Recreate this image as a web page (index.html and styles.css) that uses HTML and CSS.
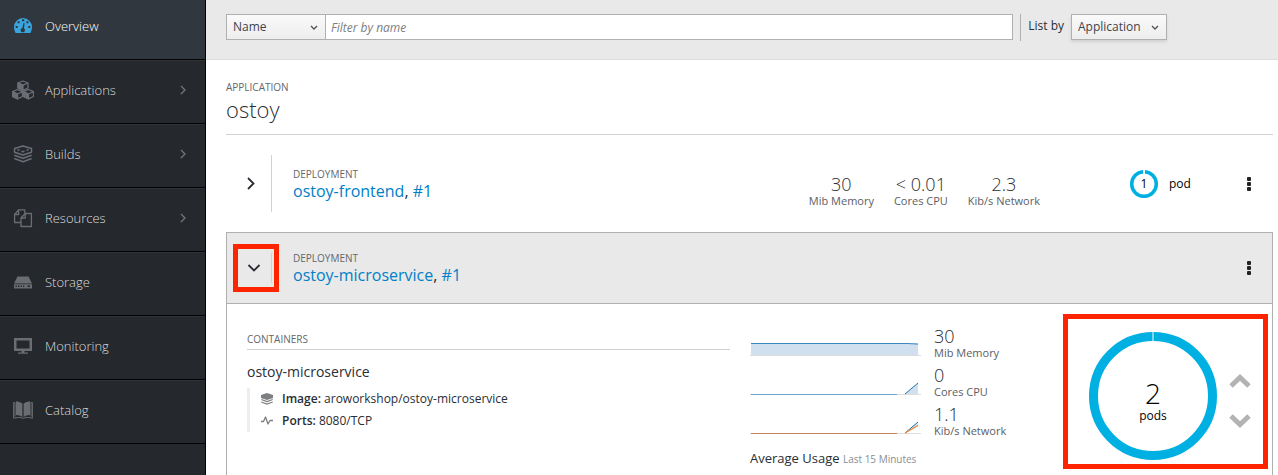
FILE: index.html
```html
<!DOCTYPE html>
<html lang="en">
<head>
<meta charset="utf-8">
<title>Overview</title>
<link rel="stylesheet" href="styles.css">
</head>
<body>
<div class="app">
  <nav class="sidebar" aria-label="Main">
    <a class="nav-item nav-item-active" href="#">
      <svg class="nav-icon" viewBox="0 0 22 20"><path fill="currentColor" fill-rule="evenodd" d="M2 11a9 9 0 0 1 18 0c0 2-.6 4-1.600 6H3.600C2.600 15 2 13 2 11zM10 5.300h2.200V3.300H10zM5.600 7.200h2V5.200h-2zM14.400 7.200h2V5.200h-2zM3.700 12h2v-2h-2zM16.300 12h2v-2h-2zM11.500 7l-1.200 5a2.200 2.200 0 1 0 1.700.3l.6-5z"/></svg>
      <span class="nav-label">Overview</span>
    </a>
    <a class="nav-item" href="#">
      <svg class="nav-icon" viewBox="0 0 22 20"><g stroke="currentColor" stroke-width="1.300" stroke-linejoin="round"><path fill="none" d="M11 1l5 2v5l-5 2.300L6 8V3zM6 3l5 2.200L16 3M5.500 9.500l5 2.200v4.800l-5 2.300-5-2.300v-4.800zM.5 11.700l5 2.300 5-2.300M16.500 9.500l5 2.200v4.800l-5 2.300-5-2.300v-4.800zM11.500 11.700l5 2.300 5-2.300"/><path fill="currentColor" d="M11 5.200v5L6 8V3zM5.500 14v4.800l-5-2.300v-4.800zM16.500 14v4.800l-5-2.300v-4.800z"/></g></svg>
      <span class="nav-label">Applications</span>
      <svg class="nav-arrow" viewBox="0 0 6 10"><path d="M1 1l4 4-4 4"/></svg>
    </a>
    <a class="nav-item" href="#">
      <svg class="nav-icon" viewBox="0 0 22 20"><g fill="none" stroke="currentColor" stroke-width="1.500" stroke-linejoin="round"><path d="M2.500 4.500L11 2l8.500 2.500v3.700L11 11 2.500 8.200zM2.300 11.200L11 14.200l8.700-3M2.300 14.500L11 17.700l8.700-3.200"/><path d="M5.500 5.700l2 .6M9.500 7.300l1.500.5 1.500-.5M14.500 6.300l2-.6"/></g></svg>
      <span class="nav-label">Builds</span>
      <svg class="nav-arrow" viewBox="0 0 6 10"><path d="M1 1l4 4-4 4"/></svg>
    </a>
    <a class="nav-item" href="#">
      <svg class="nav-icon" viewBox="0 0 22 20"><path fill="none" stroke="currentColor" stroke-width="1.300" stroke-linejoin="round" d="M9 14.500H2.600V6.500l4-4.600h6.200v4M2.600 6.500h4V1.900M9 10l4.200-4.500h6.200v13H9zM9 10h4.200V5.500"/></svg>
      <span class="nav-label">Resources</span>
      <svg class="nav-arrow" viewBox="0 0 6 10"><path d="M1 1l4 4-4 4"/></svg>
    </a>
    <a class="nav-item" href="#">
      <svg class="nav-icon" viewBox="0 0 22 20"><path fill="currentColor" d="M5.500 4.500h11l3.500 7H2z"/><path fill="currentColor" fill-rule="evenodd" d="M2 12.200h18v4.300H2zM3.500 13.600v1.300h1.300v-1.300zM6 13.600v1.300h1.300v-1.300zM8.500 13.600v1.300h1.300v-1.300zM11 13.600v1.300h1.300v-1.300zM15.500 13.600v1.300H18v-1.300z"/></svg>
      <span class="nav-label">Storage</span>
    </a>
    <a class="nav-item" href="#">
      <svg class="nav-icon" viewBox="0 0 22 20"><path fill="currentColor" fill-rule="evenodd" d="M2 2h18v13h-7.500v1.500H16v1.200H6v-1.200h3.500V15H2zM4.500 4.500v8h13v-8z"/></svg>
      <span class="nav-label">Monitoring</span>
    </a>
    <a class="nav-item" href="#">
      <svg class="nav-icon" viewBox="0 0 22 20"><path fill="currentColor" d="M4 1.200Q8 1.500 10.400 3.500V17Q8 15 4 15zM18 1.200Q14 1.500 11.600 3.500V17Q14 15 18 15z"/><path fill="none" stroke="currentColor" stroke-width="1" d="M3 2.500H1.600v15.700Q7 16.500 11 18.200q4-1.700 9.400 0V2.500H19M3 2.500v14M19 2.500v14"/></svg>
      <span class="nav-label">Catalog</span>
    </a>
  </nav>

  <main class="content">
    <form class="toolbar">
      <div class="filter">
        <div class="picker picker-name">
          <select class="picker-select" aria-label="Filter field"><option>Name</option></select>
          <svg class="picker-arrow" viewBox="0 0 8 6"><path d="M1 1l3 3 3-3"/></svg>
        </div>
        <input class="filter-input" type="text" placeholder="Filter by name" aria-label="Filter by name">
      </div>
      <div class="list-by">
        <label class="list-by-label" for="list-by">List by</label>
        <div class="picker picker-raised">
          <select class="picker-select" id="list-by"><option>Application</option></select>
          <svg class="picker-arrow" viewBox="0 0 8 6"><path d="M1 1l3 3 3-3"/></svg>
        </div>
      </div>
    </form>

    <div class="project">
      <header class="app-header">
        <div class="eyebrow">Application</div>
        <h1 class="app-name">ostoy</h1>
      </header>

      <section class="row">
        <button class="toggle" type="button" aria-label="Expand ostoy-frontend">
          <svg class="toggle-icon" viewBox="0 0 14 14"><path d="M5 1l5.500 5.500L5 12"/></svg>
        </button>
        <div class="row-title">
          <div class="eyebrow">Deployment</div>
          <h2 class="deployment"><a href="#">ostoy-frontend</a>, <a href="#">#1</a></h2>
        </div>
        <div class="summary">
          <div class="metric"><span class="metric-value">30</span><span class="metric-unit">Mib Memory</span></div>
          <div class="metric"><span class="metric-value">&lt; 0.01</span><span class="metric-unit">Cores CPU</span></div>
          <div class="metric"><span class="metric-value">2.3</span><span class="metric-unit">Kib/s Network</span></div>
        </div>
        <div class="pod-mini">
          <div class="ring ring-small">
            <svg class="ring-art" viewBox="0 0 28 28"><circle cx="14" cy="14" r="12.300" fill="none" stroke="#00b0e2" stroke-width="3.500"/><path d="M14 0v4" stroke="#fff" stroke-width="2"/></svg>
            <span class="ring-text">1</span>
          </div>
          <span>pod</span>
        </div>
        <button class="kebab" type="button" aria-label="Actions for ostoy-frontend">
          <svg class="kebab-icon" viewBox="0 0 4 14"><rect width="4" height="4" rx="1"/><rect y="5" width="4" height="4" rx="1"/><rect y="10" width="4" height="4" rx="1"/></svg>
        </button>
      </section>

      <section class="panel">
        <header class="row row-open">
          <button class="toggle toggle-marked" type="button" aria-label="Collapse ostoy-microservice">
            <svg class="toggle-icon" viewBox="0 0 14 14"><path d="M1.500 4L7 9.500 12.500 4"/></svg>
          </button>
          <div class="row-title">
            <div class="eyebrow">Deployment</div>
            <h2 class="deployment"><a href="#">ostoy-microservice</a>, <a href="#">#1</a></h2>
          </div>
          <button class="kebab" type="button" aria-label="Actions for ostoy-microservice">
            <svg class="kebab-icon" viewBox="0 0 4 14"><rect width="4" height="4" rx="1"/><rect y="5" width="4" height="4" rx="1"/><rect y="10" width="4" height="4" rx="1"/></svg>
          </button>
        </header>

        <div class="panel-body">
          <div class="containers">
            <h3 class="eyebrow containers-title">Containers</h3>
            <h4 class="container-name">ostoy-microservice</h4>
            <ul class="facts">
              <li class="fact">
                <svg class="fact-icon" viewBox="0 0 12 12"><path fill="currentColor" d="M0 2l6-2 6 2v3L6 7 0 5z"/><path fill="none" stroke="currentColor" stroke-width="1.200" d="M.3 6.500L6 8.600l5.700-2.100M.3 9L6 11.100 11.700 9"/></svg>
                <span><b>Image:</b> aroworkshop/ostoy-microservice</span>
              </li>
              <li class="fact">
                <svg class="fact-icon" viewBox="0 0 12 12"><path fill="none" stroke="currentColor" stroke-width="1.300" stroke-linejoin="round" d="M0 6.500h2.500L4.500 2 7 9 9 5.500h3"/></svg>
                <span><b>Ports:</b> 8080/TCP</span>
              </li>
            </ul>
          </div>

          <div class="usage">
            <div class="usage-row">
              <svg class="spark" viewBox="0 0 171 26"><path d="M0 25.500h171" stroke="#ddd"/><path fill="#d1e0ee" d="M1 13h167v12H1z"/><path fill="none" stroke="#3a87be" d="M1 13.500h156l11 .6"/></svg>
              <div class="metric metric-left"><span class="metric-value">30</span><span class="metric-unit">Mib Memory</span></div>
            </div>
            <div class="usage-row">
              <svg class="spark" viewBox="0 0 171 26"><path d="M0 25.500h171" stroke="#ddd"/><path fill="#d1e0ee" d="M155 25l13-11v11z"/><path fill="none" stroke="#6ba4cf" d="M1 25.500h146"/><path fill="none" stroke="#1f77b4" d="M155 25l13-11"/></svg>
              <div class="metric metric-left"><span class="metric-value">0</span><span class="metric-unit">Cores CPU</span></div>
            </div>
            <div class="usage-row">
              <svg class="spark" viewBox="0 0 171 26"><path d="M0 25.500h171" stroke="#ddd"/><path fill="#d1e0ee" d="M155 25l13-11v4z"/><path fill="none" stroke="#c58663" d="M1 25.500h146"/><path fill="none" stroke="#1f77b4" d="M155 25l13-11"/><path fill="none" stroke="#f58634" stroke-width="1.300" d="M155 25l13-7.500"/></svg>
              <div class="metric metric-left"><span class="metric-value">1.1</span><span class="metric-unit">Kib/s Network</span></div>
            </div>
            <div class="usage-caption">Average Usage <small>Last 15 Minutes</small></div>
          </div>

          <div class="scaler">
            <div class="ring ring-large">
              <svg class="ring-art" viewBox="0 0 128 128"><circle cx="64" cy="64" r="59.500" fill="none" stroke="#00b0e2" stroke-width="9"/><path d="M64 0v10" stroke="#fff"/></svg>
              <div class="ring-text"><span class="pod-count">2</span><span class="pod-word">pods</span></div>
            </div>
            <div class="steps">
              <button class="step" type="button" aria-label="Scale up"><svg class="step-icon" viewBox="0 0 22 14"><path d="M2 12l9-8.500L20 12"/></svg></button>
              <button class="step" type="button" aria-label="Scale down"><svg class="step-icon" viewBox="0 0 22 14"><path d="M2 2l9 8.500L20 2"/></svg></button>
            </div>
          </div>
        </div>
      </section>
    </div>
  </main>
</div>
</body>
</html>
```
FILE: styles.css
```css
* { box-sizing: border-box; }

body {
  margin: 0;
  font: 12px/20px "Open Sans", sans-serif;
  color: #292e34;
  background: #fff;
}

h1, h2, h3, h4, ul { margin: 0; padding: 0; }

button {
  padding: 0;
  border: 0;
  background: none;
  color: inherit;
  font: inherit;
}

a { color: #0080c8; text-decoration: none; }

.app {
  display: grid;
  grid-template-columns: 206px 1fr;
  height: 100vh;
  overflow: hidden;
}

/* Sidebar */
.sidebar {
  display: flex;
  flex-direction: column;
  background: #25282d;
  border-right: 1px solid #030303;
}

.nav-item {
  display: flex;
  align-items: center;
  gap: 11px;
  height: 64px;
  padding: 0 19px 4px 12px;
  border-top: 1px solid #2f3338;
  border-bottom: 1px solid #030303;
  color: #dcdcdc;
  font-size: 13px;
  font-weight: 300;
}

.nav-item-active {
  height: 60px;
  padding-bottom: 7px;
  border-top: 0;
  background: #30373f;
  color: #fff;
}

.nav-icon { width: 22px; height: 20px; color: #6a6e73; }
.nav-item-active .nav-icon { color: #39a5dc; }
.nav-label { flex: 1; }

.nav-arrow {
  width: 6px;
  height: 10px;
  fill: none;
  stroke: #72767b;
  stroke-width: 1.3;
}

/* Toolbar */
.content { display: flex; flex-direction: column; min-width: 0; }

.toolbar {
  display: flex;
  gap: 7px;
  height: 60px;
  padding: 14px 111px 0 20px;
  background: #e9e9e9;
  border-bottom: 1px solid #ddd;
}

.filter { display: flex; flex: 1; height: 26px; }

.filter-input {
  flex: 1;
  min-width: 0;
  padding: 1px 5px 0;
  border: 1px solid #b0b0b0;
  border-left: 0;
  border-radius: 0;
  background: #fff;
  font: inherit;
}

.filter-input::placeholder { color: #7c7e80; font-style: italic; }

.picker { display: grid; align-items: center; height: 26px; }
.picker-name { width: 100px; }
.picker-raised { width: 96px; box-shadow: 0 2px 3px rgba(3, 3, 3, 0.1); }

.picker-select {
  grid-area: 1 / 1;
  width: 100%;
  height: 26px;
  padding: 0 6px;
  border: 1px solid #b0b0b0;
  border-radius: 0;
  appearance: none;
  background: linear-gradient(#fafafa, #ededed);
  color: #3f444a;
  font: inherit;
}

.picker-arrow {
  grid-area: 1 / 1;
  justify-self: end;
  width: 8px;
  height: 6px;
  margin: 2px 8px 0 0;
  fill: none;
  stroke: #4d5258;
  stroke-width: 1.3;
  pointer-events: none;
}

.list-by {
  display: flex;
  gap: 7px;
  height: 27px;
  padding-left: 7px;
  border-left: 1px solid #b0b0b0;
}

.list-by-label { line-height: 24px; }

/* Project */
.project {
  display: flex;
  flex: 1;
  flex-direction: column;
  padding: 17px 5px 0 20px;
}

.eyebrow {
  color: #63676b;
  font-size: 10px;
  font-weight: 400;
  line-height: 20px;
  text-transform: uppercase;
}

.app-header { height: 58px; border-bottom: 1px solid #d1d1d1; }
.app-name { font-size: 22px; font-weight: 300; line-height: 24px; }

.row {
  display: flex;
  align-items: center;
  height: 57px;
  margin: 20px 0;
}

.toggle {
  align-self: stretch;
  width: 46px;
  padding-left: 3px;
  border-right: 1px solid #d1d1d1;
}

.toggle-icon {
  display: block;
  width: 14px;
  height: 14px;
  margin: 0 auto;
  fill: none;
  stroke: #292e34;
  stroke-width: 1.8;
}

.row-title { flex: 1; padding-left: 21px; }
.row-title .eyebrow { line-height: 14px; }
.deployment { font-size: 16px; font-weight: 400; line-height: 20px; }

.summary { display: flex; gap: 20px; padding-top: 16px; }
.metric { display: flex; flex-direction: column; align-items: center; }
.metric-left { align-items: flex-start; }
.metric-value { font-size: 18px; font-weight: 300; line-height: 18px; }
.metric-unit { color: #5c6065; font-size: 11px; line-height: 16px; }

.pod-mini {
  display: flex;
  align-items: center;
  gap: 11px;
  width: 109px;
  margin-left: 90px;
  color: #030303;
}

.ring { display: grid; place-items: center; }
.ring-small { width: 28px; height: 28px; }
.ring-large { width: 128px; height: 128px; }
.ring-art { grid-area: 1 / 1; width: 100%; height: 100%; }
.ring-text { grid-area: 1 / 1; display: grid; justify-items: center; color: #030303; }

.kebab { width: 20px; height: 24px; margin-right: 14px; }
.kebab-icon { display: block; width: 4px; height: 14px; margin: 0 auto; fill: #222; }

/* Expanded deployment */
.panel {
  display: flex;
  flex: 1;
  flex-direction: column;
  border: 1px solid #b0b0b0;
  border-bottom: 0;
}

.row-open {
  height: 71px;
  margin: 0;
  border-bottom: 1px solid #b0b0b0;
  background: #e9e9e9;
}

.row-open .kebab { margin-right: 13px; }

.toggle-marked {
  position: relative;
  align-self: center;
  width: 45px;
  height: 30px;
  padding-left: 9px;
}

.toggle-marked::after {
  content: "";
  position: absolute;
  inset: -9px -8px -9px 6px;
  border: 5px solid #ff2400;
}

.panel-body {
  display: grid;
  grid-template-columns: 1fr 293px 205px;
  column-gap: 20px;
  padding: 10px 4px 0 20px;
}

.containers { padding-top: 15px; }
.containers-title { border-bottom: 1px solid #d1d1d1; }
.container-name { margin-top: 12px; font-size: 14px; font-weight: 400; line-height: 20px; }

.facts {
  margin-top: 6px;
  padding-left: 11px;
  border-left: 3px solid #ededed;
  list-style: none;
}

.fact { display: flex; align-items: center; gap: 9px; line-height: 22px; }
.fact-icon { width: 12px; height: 12px; color: #7c7e80; }
.fact b { font-weight: 600; }

.usage { padding-top: 13px; }
.usage-row { display: flex; gap: 13px; height: 39px; }
.spark { width: 171px; height: 26px; margin-top: 3px; fill: none; }
.usage-caption { padding-top: 5px; font-size: 13px; line-height: 18px; }
.usage-caption small { color: #8b8d8f; font-size: 10px; }

.scaler {
  display: flex;
  align-items: center;
  gap: 12px;
  height: 155px;
  padding: 8px 11px 0 21px;
  border: 5px solid #ff2400;
}

.ring-large .ring-text { padding-top: 12px; }
.pod-count { font-size: 28px; font-weight: 300; line-height: 28px; }
.pod-word { line-height: 18px; }
.steps { display: grid; gap: 26px; padding-top: 10px; }
.step { width: 22px; height: 14px; }
.step-icon { display: block; width: 22px; height: 14px; fill: none; stroke: #b3b3b3; stroke-width: 5; }
```
